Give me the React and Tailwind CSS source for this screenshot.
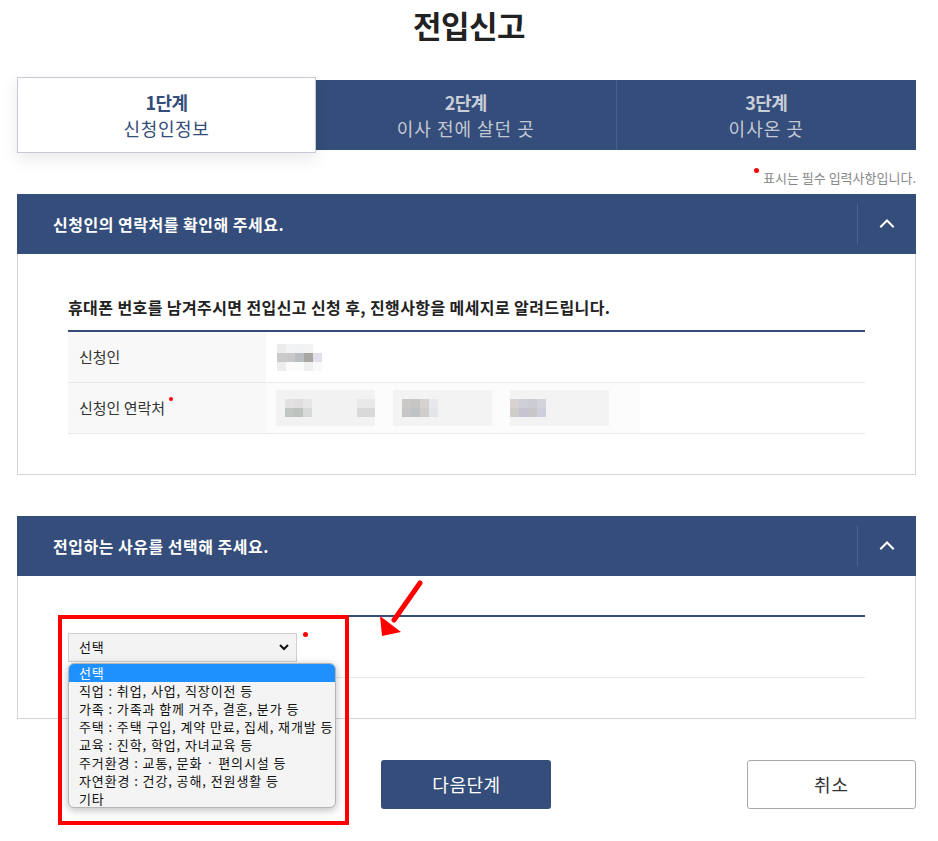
import React from "react";

const NAVY = "bg-[#344d7a]";

function Chevron() {
  return (
    <svg width="16" height="10" viewBox="0 0 16 10" fill="none">
      <polyline points="2,8.5 8,2.5 14,8.5" stroke="#ffffff" strokeWidth="2" strokeLinecap="square" />
    </svg>
  );
}

function SectionHeader({ title }) {
  return (
    <div className={`${NAVY} h-[60px] flex items-center justify-between pl-[36px]`}>
      <span className="text-white text-[16px] font-bold tracking-[0.5px] leading-[22px]">{title}</span>
      <div className="flex items-center h-full">
        <div className="w-px h-[40px] bg-[#4d6391]" />
        <div className="w-[58px] flex items-center justify-center pb-[2px]">
          <Chevron />
        </div>
      </div>
    </div>
  );
}

function Mosaic({ rows, size = 9 }) {
  return (
    <div className="flex flex-col blur-[0.6px]">
      {rows.map((r, i) => (
        <div key={i} className="flex">
          {r.map((c, j) => (
            <span key={j} className="block" style={{ width: size, height: size, background: c }} />
          ))}
        </div>
      ))}
    </div>
  );
}

const items = [
  "선택",
  "직업 : 취업, 사업, 직장이전 등",
  "가족 : 가족과 함께 거주, 결혼, 분가 등",
  "주택 : 주택 구입, 계약 만료, 집세, 재개발 등",
  "교육 : 진학, 학업, 자녀교육 등",
  "주거환경 : 교통, 문화 · 편의시설 등",
  "자연환경 : 건강, 공해, 전원생활 등",
  "기타",
];

export default function App() {
  return (
    <div className="relative w-[938px] min-h-[841px] bg-white font-['Noto_Sans_CJK_KR','Noto_Sans',sans-serif] text-[#333]">
      <h1 className="pt-[4px] text-center text-[31px] leading-[42px] font-bold text-[#222] tracking-[-0.5px]">전입신고</h1>

      <div className="ml-[17px] w-[899px]">
        {/* Tabs */}
        <div className="mt-[31px] flex items-center h-[76px]">
          <div className="relative z-10 w-[299px] h-[76px] border border-[#c5cad5] bg-white shadow-[0_6px_16px_rgba(0,0,0,0.09)] flex flex-col items-center justify-center">
            <span className="text-[18px] leading-[26px] font-bold text-[#344d7a] tracking-[-0.5px]">1단계</span>
            <span className="text-[18px] leading-[26px] text-[#344d7a] tracking-[0.6px]">신청인정보</span>
          </div>
          <div className={`${NAVY} flex-1 h-[70px] flex flex-col items-center justify-center border-r border-[#46608c]`}>
            <span className="text-[18px] leading-[26px] font-bold text-[#c9ced8] tracking-[-0.5px]">2단계</span>
            <span className="text-[18px] leading-[26px] text-[#c3c9d4] tracking-[1px]">이사 전에 살던 곳</span>
          </div>
          <div className={`${NAVY} flex-1 h-[70px] flex flex-col items-center justify-center`}>
            <span className="text-[18px] leading-[26px] font-bold text-[#c9ced8] tracking-[-0.5px]">3단계</span>
            <span className="text-[18px] leading-[26px] text-[#c3c9d4] tracking-[1px]">이사온 곳</span>
          </div>
        </div>

        {/* Required note */}
        <div className="h-[41px] pt-[16px] flex justify-end">
          <span className="relative text-[13px] leading-[18px] text-[#888] pl-[9px]">
            <span className="absolute left-0 top-[-1px] w-[5px] h-[5px] rounded-full bg-[#ff0000]" />
            표시는 필수 입력사항입니다.
          </span>
        </div>

        {/* Section 1 */}
        <SectionHeader title="신청인의 연락처를 확인해 주세요." />
        <div className="border-x border-b border-[#d6d6d6] px-[50px] pt-[42px] pb-[40px]">
          <p className="text-[16px] leading-[22px] font-bold text-[#222] tracking-[0.4px]">
            휴대폰 번호를 남겨주시면 전입신고 신청 후, 진행사항을 메세지로 알려드립니다.
          </p>
          <div className="mt-[12px] border-t-2 border-[#344d7a]">
            <div className="flex h-[51px] border-b border-[#e8e8e8]">
              <div className="w-[198px] bg-[#f8f8f8] flex items-center pl-[11px] text-[15px] text-[#333]">신청인</div>
              <div className="flex items-center pl-[11px]">
                <Mosaic
                  rows={[
                    ["#ebebeb", "#f3f3f3", "#f0f2f3", "#f3f3f3", "#ffffff"],
                    ["#cbcbcb", "#c9c9c9", "#b9bfc0", "#aaa7a3", "#e0e0ea"],
                    ["#ececec", "#fbfbfb", "#fbfbfb", "#efefef", "#f9f9fb"],
                  ]}
                />
              </div>
            </div>
            <div className="flex h-[51px] border-b border-[#e8e8e8]">
              <div className="w-[198px] bg-[#f8f8f8] flex items-center pl-[11px] text-[15px] text-[#333]">
                <span className="relative">
                  신청인 연락처
                  <span className="absolute right-[-8px] top-[0px] w-[4px] h-[4px] rounded-full bg-[#ff0000]" />
                </span>
              </div>
              <div className="w-[374px] bg-[#fcfcfc] flex items-center pl-[10px] gap-[18px]">
                <div className="w-[99px] h-[36px] bg-[#f2f2f2] flex items-center pl-[9px] gap-[45px]">
                  <Mosaic rows={[["#e3e0e2", "#e0dfe0", "#e6e6e6"], ["#c1c6c3", "#bcc3bf", "#d8d9d9"]]} />
                  <Mosaic rows={[["#e9e9e9", "#e9e9e9"], ["#d9d9d9", "#d9d9d9"]]} />
                </div>
                <div className="w-[99px] h-[36px] bg-[#f3f3f3] flex items-center pl-[9px]">
                  <Mosaic rows={[["#cbc9c7", "#c7c6c5", "#d5d2cf", "#e8e8ec"], ["#c6c6c6", "#bfc3c6", "#d0cecc", "#e4e5ea"]]} />
                </div>
                <div className="w-[99px] h-[36px] bg-[#f3f3f3] flex items-center">
                  <Mosaic rows={[["#d8d2d0", "#cfcfd8", "#cccbd0", "#d3d4db"], ["#d0cdcb", "#c5c4d0", "#c8c6c9", "#cdd0dc"]]} />
                </div>
              </div>
            </div>
          </div>
        </div>

        {/* Section 2 */}
        <div className="mt-[41px]">
          <SectionHeader title="전입하는 사유를 선택해 주세요." />
          <div className="border-x border-b border-[#d6d6d6] px-[50px] pt-[39px] pb-[40px]">
            <div className="border-t-2 border-[#344d7a]">
              <div className="h-[61px] border-b border-[#e8e8e8] flex items-center">
                <div className="relative">
                  <div className="w-[229px] h-[29px] border border-[#cfcfcf] bg-[#f3f3f3] flex items-center justify-between pl-[10px] pr-[6px] text-[13px] text-[#111] tracking-[0.8px]">
                    <span>선택</span>
                    <svg width="12" height="8" viewBox="0 0 12 8" fill="none">
                      <polyline points="2,2 6,6 10,2" stroke="#111" strokeWidth="2" />
                    </svg>
                  </div>
                  <span className="absolute left-[235px] top-[-1px] w-[5px] h-[5px] rounded-full bg-[#ff0000]" />
                </div>
              </div>
            </div>
          </div>
        </div>

        {/* Buttons */}
        <div className="mt-[41px] grid grid-cols-3 h-[49px]">
          <div />
          <div className="flex justify-center">
            <button className={`${NAVY} w-[170px] h-[49px] rounded-[3px] text-white text-[18px] tracking-[0.5px]`}>다음단계</button>
          </div>
          <div className="flex justify-end">
            <button className="w-[169px] h-[49px] rounded-[3px] border border-[#aaa] bg-white text-[#333] text-[18px] tracking-[1px]">취소</button>
          </div>
        </div>
      </div>

      {/* Open dropdown list */}
      <div className="absolute left-[68px] top-[663px] w-[268px] h-[145px] rounded-[6px] border border-[#b5b5b5] bg-[#f4f4f4] shadow-[0_2px_8px_rgba(0,0,0,0.28)] overflow-hidden">
        {items.map((t, i) => (
          <div
            key={i}
            className={`h-[18px] leading-[18px] px-[10px] text-[13px] tracking-[0.9px] whitespace-nowrap ${i === 0 ? "bg-[#1e90ff] text-white" : "text-[#111]"}`}
          >
            {t}
          </div>
        ))}
      </div>

      {/* Red highlight box */}
      <div className="absolute left-[58px] top-[615px] w-[291px] h-[210px] border-[4px] border-[#ff0000] pointer-events-none" />

      {/* Red arrow */}
      <svg className="absolute left-[370px] top-[575px]" width="60" height="70" viewBox="0 0 60 70">
        <line x1="50" y1="8" x2="24" y2="45" stroke="#ff0000" strokeWidth="5" strokeLinecap="round" />
        <polygon points="10,41 12,61 31,57" fill="#ff0000" />
      </svg>
    </div>
  );
}
